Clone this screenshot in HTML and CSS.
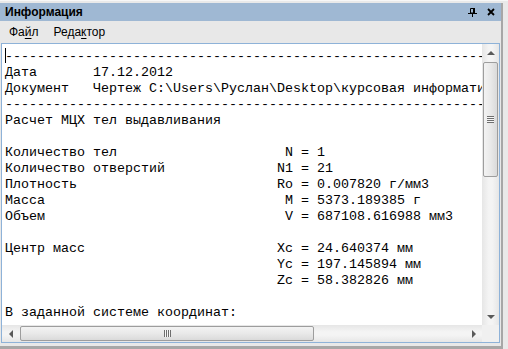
FILE: index.html
```html
<!DOCTYPE html>
<html>
<head>
  <title>Информация</title>
  <link rel="stylesheet" href="styles.css">
</head>
<body>
  <div class="frame">
    <div class="window">
      <div class="titlebar">
        <span class="title">Информация</span>
        <span class="title-buttons">
          <svg class="pin" width="9" height="9" viewBox="0 0 9 9">
            <path d="M2.5 0.5h4v4.5h-4z" fill="none" stroke="#000"/>
            <rect x="5" y="0" width="2" height="5" fill="#000"/>
            <rect x="0" y="5" width="9" height="1" fill="#000"/>
            <rect x="4" y="6" width="1" height="3" fill="#000"/>
          </svg>
          <svg class="close" width="8" height="8" viewBox="0 0 8 8">
            <path d="M1 1L7 7M7 1L1 7" stroke="#000" stroke-width="1.8"/>
          </svg>
        </span>
      </div>

      <div class="menubar">
        <span class="menu-item">Фа<u>й</u>л</span>
        <span class="menu-item">Реда<u>к</u>тор</span>
      </div>

      <div class="editor">
        <div class="view">
          <pre class="text"><span class="caret"></span>------------------------------------------------------------------------
Дата       17.12.2012
Документ   Чертеж C:\Users\Руслан\Desktop\курсовая информатика\деталь.cdw
------------------------------------------------------------------------
Расчет МЦХ тел выдавливания

Количество тел                     N = 1
Количество отверстий              N1 = 21
Плотность                         Ro = 0.007820 г/мм3
Масса                              M = 5373.189385 г
Объем                              V = 687108.616988 мм3

Центр масс                        Xc = 24.640374 мм
                                  Yc = 197.145894 мм
                                  Zc = 58.382826 мм

В заданной системе координат:</pre>
          <div class="vscroll">
            <div class="sb-button"><span class="arrow up"></span></div>
            <div class="sb-track">
              <div class="thumb v-thumb"><span class="grip"></span></div>
            </div>
            <div class="sb-button"><span class="arrow down"></span></div>
          </div>
        </div>
        <div class="hscroll">
          <div class="sb-button"><span class="arrow left"></span></div>
          <div class="sb-track h-track">
            <div class="thumb h-thumb"><span class="grip"></span></div>
          </div>
          <div class="sb-button"><span class="arrow right"></span></div>
          <div class="corner"></div>
        </div>
      </div>
    </div>
  </div>
</body>
</html>
```

FILE: styles.css
```css
* {
  box-sizing: border-box;
}

body {
  margin: 0;
  background-color: #f0f0f0;
}

.frame {
  width: 508px;
  height: 349px;
  padding: 3px 4px 0 0;
  background: linear-gradient(to bottom, #f7f7f7 0, #f7f7f7 1px, #e9e9e9 1px);
}

.window {
  width: 503px;
  height: 346px;
  background-color: #e8e8e8;
  border-right: 2px solid #a7a7a7;
  border-bottom: 3px solid #a7a7a7;
}

.titlebar {
  height: 18px;
  background-color: #9fb8d3;
  display: flex;
  align-items: center;
  justify-content: space-between;
  padding: 0 6px 0 5px;
}

.title {
  font-family: "Liberation Sans", Arial, sans-serif;
  font-weight: bold;
  font-size: 12px;
  color: #000;
}

.title-buttons {
  display: flex;
  align-items: center;
  gap: 10px;
}

.pin, .close {
  display: block;
}

.menubar {
  height: 22px;
  display: flex;
  align-items: center;
  gap: 15px;
  padding-left: 9px;
  font-family: "Liberation Sans", Arial, sans-serif;
  font-size: 12px;
  color: #000;
}

.menu-item u {
  text-decoration-thickness: 1px;
  text-underline-offset: 2px;
}

.editor {
  margin: 0 1px 0 1px;
  border: 1px solid #8eb2d8;
  background-color: #fff;
  height: 300px;
  display: flex;
  flex-direction: column;
}

.view {
  flex: 1;
  display: flex;
  min-height: 0;
}

.text {
  flex: 1;
  margin: 0;
  padding: 4px 0 0 3px;
  overflow: hidden;
  font-family: "Liberation Mono", "Courier New", monospace;
  font-size: 13.33px;
  line-height: 16px;
  color: #000;
  white-space: pre;
}

.caret {
  display: inline-block;
  width: 1px;
  height: 15px;
  margin-right: -1px;
  vertical-align: -3px;
  background-color: #000;
}

.vscroll {
  width: 17px;
  display: flex;
  flex-direction: column;
  background: linear-gradient(to right, #e6e6e6, #f4f4f4 40%, #f4f4f4 60%, #e6e6e6);
}

.hscroll {
  height: 17px;
  flex: none;
  display: flex;
  background: linear-gradient(to bottom, #e6e6e6, #f4f4f4 40%, #f4f4f4 60%, #e6e6e6);
}

.sb-button {
  width: 17px;
  height: 17px;
  flex: none;
  display: flex;
  align-items: center;
  justify-content: center;
}

.sb-track {
  flex: 1;
  display: flex;
  flex-direction: column;
}

.h-track {
  flex-direction: row;
}

.thumb {
  border: 1px solid #9d9d9d;
  border-radius: 2px;
  display: flex;
  align-items: center;
  justify-content: center;
}

.v-thumb {
  height: 115px;
  margin: 1px 0 0 1px;
  width: 15px;
  background: linear-gradient(to right, #f3f3f3, #e9e9e9 50%, #dadada);
}

.h-thumb {
  width: 294px;
  height: 15px;
  margin: 1px 0 0 1px;
  background: linear-gradient(to bottom, #f3f3f3, #e9e9e9 50%, #dadada);
}

.v-thumb .grip {
  width: 7px;
  height: 7px;
  background: repeating-linear-gradient(to bottom, #6e6e6e 0, #6e6e6e 1px, #f6f6f6 1px, #f6f6f6 2px);
}

.h-thumb .grip {
  width: 7px;
  height: 7px;
  background: repeating-linear-gradient(to right, #6e6e6e 0, #6e6e6e 1px, #f6f6f6 1px, #f6f6f6 2px);
}

.arrow {
  width: 0;
  height: 0;
  border: 4px solid transparent;
}

.arrow.up {
  border-bottom-color: #5a5a5a;
  border-top-width: 0;
}

.arrow.down {
  border-top-color: #5a5a5a;
  border-bottom-width: 0;
}

.arrow.left {
  border-right-color: #5a5a5a;
  border-left-width: 0;
}

.arrow.right {
  border-left-color: #5a5a5a;
  border-right-width: 0;
}

.corner {
  width: 17px;
  height: 17px;
  background-color: #f0f0f0;
}
```
